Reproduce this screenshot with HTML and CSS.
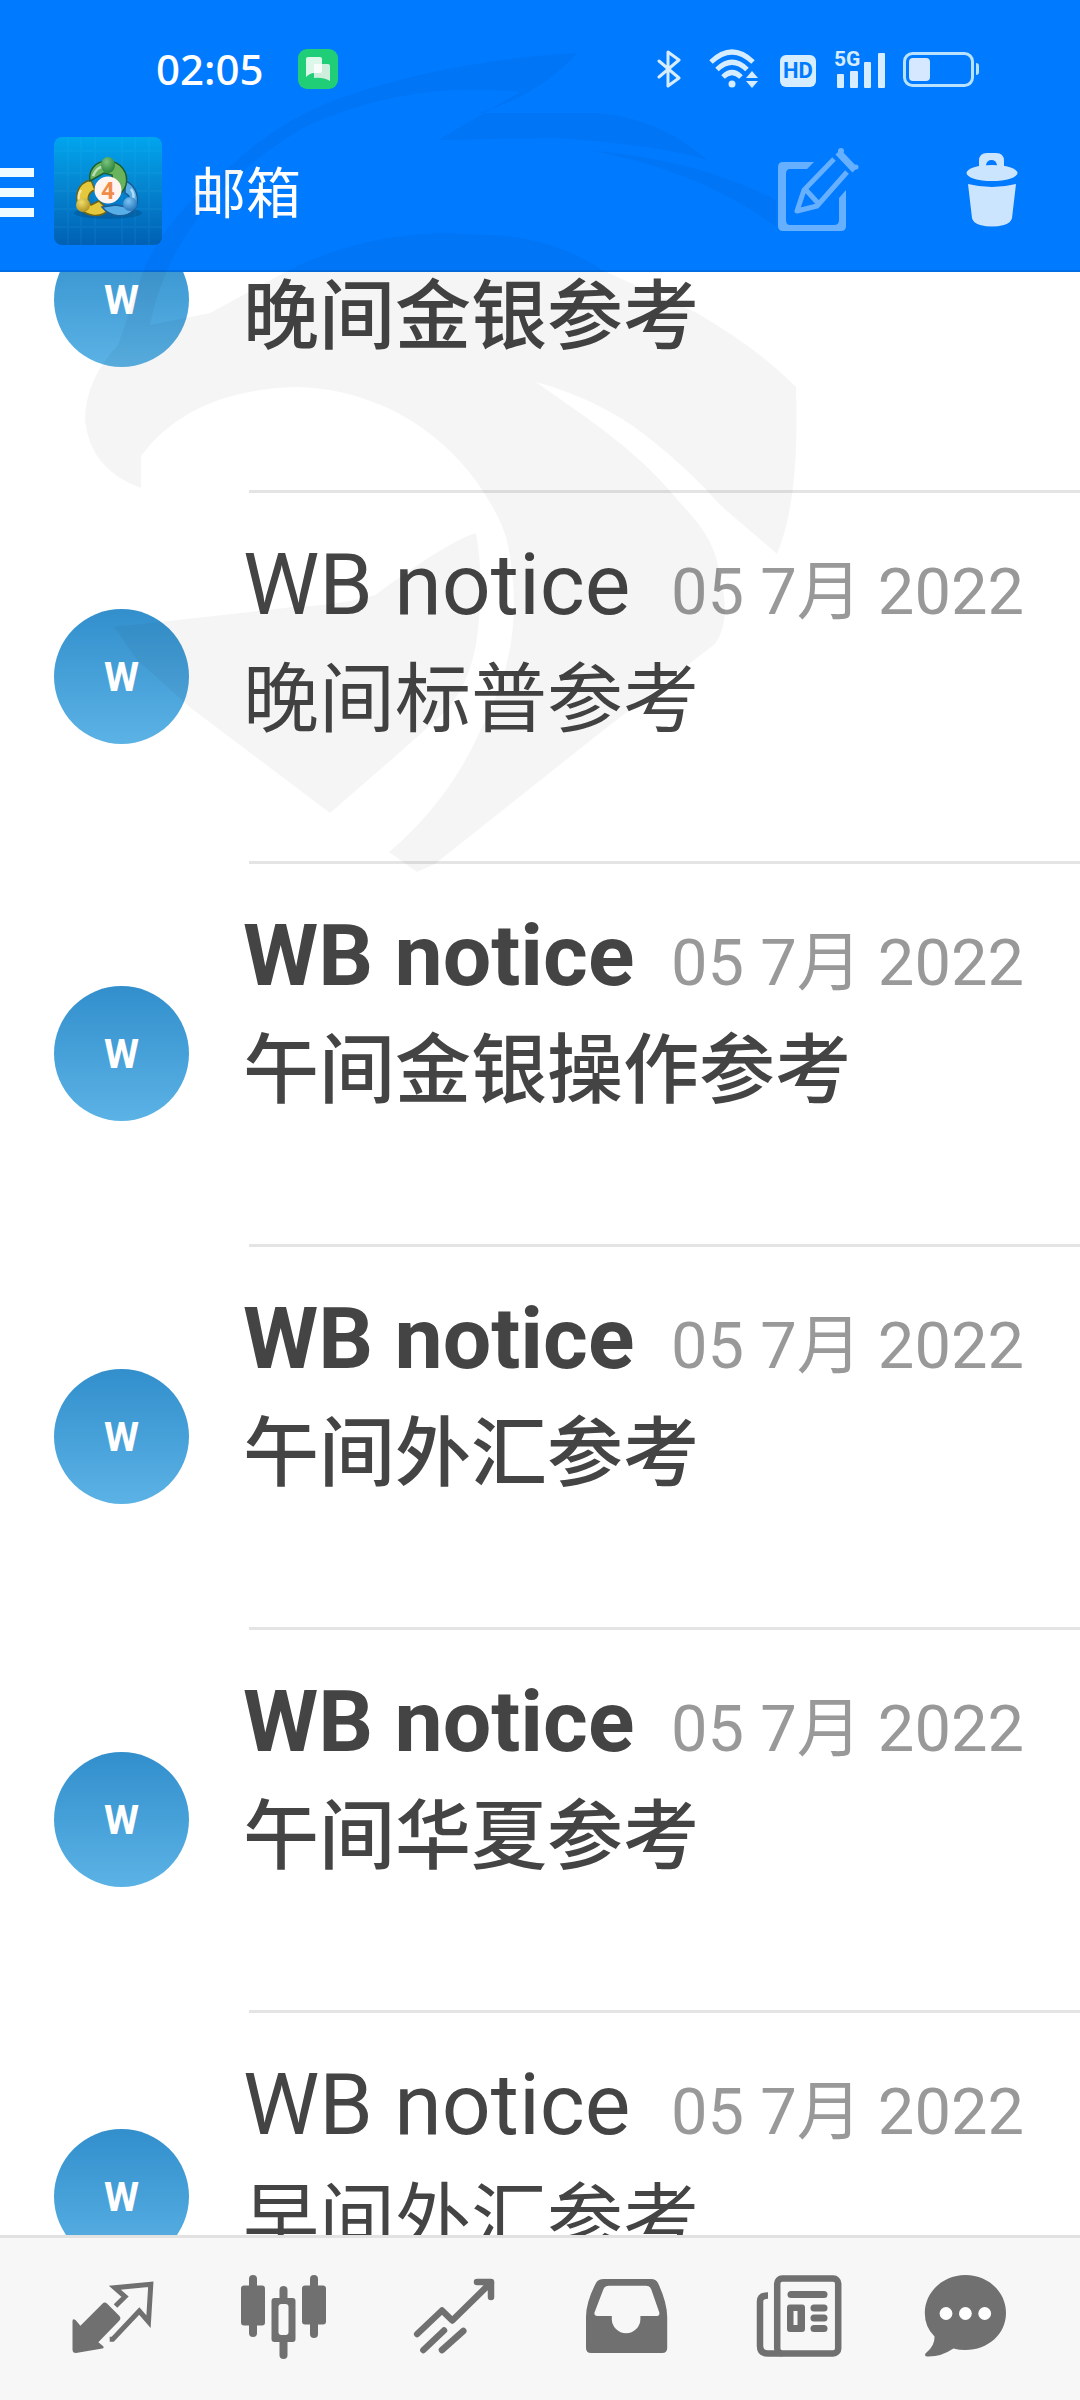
FILE: index.html
```html
<!DOCTYPE html>
<html lang="zh-CN">
<head>
<meta charset="utf-8">
<meta name="viewport" content="width=device-width, initial-scale=1">
<title>邮箱</title>
<link rel="stylesheet" href="styles.css">
</head>
<body>
<div class="app">
  <header class="top">
    <div class="status">
      <span class="clock">02:05</span>
      <svg class="msg-badge" viewBox="0 0 40 40" width="40" height="40" aria-hidden="true">
        <rect width="40" height="40" rx="9" fill="#20ce78"/>
        <path d="M16 15h14q2 0 2 2v15q-7-4-16-3z" fill="#cdeedd"/>
        <path d="M10 8h12q2 0 2 2v12q0 2-2 2h-6q-4 0-8 4V10q0-2 2-2z" fill="#fff" fill-opacity=".85"/>
      </svg>
      <div class="status-icons">
        <svg viewBox="0 0 24 40" width="24" height="40" fill="none" stroke="#d6ecff" stroke-width="3" stroke-linejoin="round" stroke-linecap="round" aria-hidden="true">
          <path d="M2 12l20 17-11 8V3l11 8L2 28"/>
        </svg>
        <svg class="wifi" viewBox="0 0 50 40" width="50" height="40" aria-hidden="true">
          <g fill="none" stroke="#d6ecff" stroke-width="5">
            <path d="M2 13Q23-7 44 13"/><path d="M8 20.500Q23 6 38 20.500"/><path d="M14 28q9-9 18 0"/>
          </g>
          <circle cx="23" cy="35" r="3.500" fill="#d6ecff"/>
          <path d="M43 22l6 7H37zM43 39l6-7H37z" fill="#d6ecff"/>
        </svg>
        <span class="hd">HD</span>
        <span class="signal">
          <span class="gen">5G</span>
          <svg viewBox="0 0 50 40" width="50" height="40" fill="#d6ecff" aria-hidden="true">
            <rect x="2" y="25" width="7" height="14" rx="1"/><rect x="15" y="22" width="8" height="17" rx="1"/><rect x="29" y="13" width="7" height="26" rx="1"/><rect x="43" y="4" width="7" height="35" rx="1"/>
          </svg>
        </span>
        <svg class="battery" viewBox="0 0 76 40" width="76" height="40" aria-hidden="true">
          <rect x="1.500" y="4.500" width="68" height="32" rx="8" fill="none" stroke="#b9e2ff" stroke-width="3"/>
          <rect x="6" y="9" width="21" height="23" rx="4" fill="#d6e8ff"/>
          <path d="M73 14q3 0 3 3v6q0 3-3 3z" fill="#b9e2ff"/>
        </svg>
      </div>
    </div>
    <div class="bar">
      <button class="menu" aria-label="菜单"><span></span><span></span><span></span></button>
      <svg class="logo" viewBox="0 0 108 108" width="108" height="108" aria-hidden="true">
        <defs>
          <linearGradient id="bg" x1="0" y1="0" x2="0" y2="1"><stop offset="0" stop-color="#00a5ee"/><stop offset=".45" stop-color="#0586d0"/><stop offset="1" stop-color="#0060b4"/></linearGradient>
          <radialGradient id="gr" cx=".4" cy=".3" r=".8"><stop offset="0" stop-color="#7cc47c"/><stop offset="1" stop-color="#1e7a34"/></radialGradient>
          <radialGradient id="ye" cx=".4" cy=".3" r=".8"><stop offset="0" stop-color="#f0dc6a"/><stop offset="1" stop-color="#a88a1a"/></radialGradient>
          <radialGradient id="bl" cx=".4" cy=".3" r=".8"><stop offset="0" stop-color="#7cc4f4"/><stop offset="1" stop-color="#1c6cb4"/></radialGradient>
        </defs>
        <rect width="108" height="108" rx="8" fill="url(#bg)"/>
        <path d="M14 0v108M27 0v108M41 0v108M68 0v108M81 0v108M95 0v108M0 14h108M0 36h108M0 54h108M0 72h108M0 90h108" stroke="#5cc8ff" stroke-opacity=".1" stroke-width="1.500"/>
        <ellipse cx="54" cy="76" rx="34" ry="6" fill="#023a6a" opacity=".3"/>
        <path d="M37 43C22 46 20 62 26 71c6 9 22 10 28 2l-9-9-8 4c-5-5-3-13 4-15z" fill="#e6c83c" stroke="#6e6414" stroke-width="1.500"/>
        <path d="M71 44c12 4 16 20 9 29-9 9-24 7-32-3l14-2 10 2c6-4 5-11-1-14z" fill="#58aee6" stroke="#185c98" stroke-width="1.500"/>
        <path d="M36 44c-2-10 5-20 17-20 14 0 22 12 19 24-2 7-7 10-10 12l-4-22-8-2z" fill="#69b35c" stroke="#1c5e32" stroke-width="1.500"/>
        <path d="M39 39q4-10 11-9M27 53q-5 7 0 15M77 52q5 7 0 13" stroke="#fff" stroke-opacity=".55" stroke-width="2.500" fill="none"/>
        <ellipse cx="54" cy="28" rx="7" ry="8" fill="url(#gr)"/>
        <circle cx="29" cy="68" r="7" fill="url(#ye)"/>
        <circle cx="76" cy="67" r="7" fill="url(#bl)"/>
        <circle cx="54" cy="53" r="13.500" fill="#fff4f0"/>
        <text x="54" y="62" class="logo-num">4</text>
      </svg>
      <h1 class="title">邮箱</h1>
      <button class="tool compose" aria-label="写邮件">
        <svg viewBox="0 0 82 84" width="82" height="84" fill="none" stroke="#66b0ff" aria-hidden="true">
          <path d="M36 15l-7 7H12q-4 0-4 5v46q0 5 4 5h44q5 0 5-5V51l7-8v36q0 5-5 5H5q-5 0-5-5V20q0-5 5-5z" fill="#66b0ff" stroke="none"/>
          <path d="M56 12L26 43l-7 21 20-5 30-34M28 43l12 13" stroke-width="5" stroke-linejoin="round"/>
          <path d="M60 5l17 18" stroke-width="7"/>
          <circle cx="63" cy="4" r="3" fill="#66b0ff" stroke="none"/><circle cx="78" cy="20" r="2.500" fill="#66b0ff" stroke="none"/>
        </svg>
      </button>
      <button class="tool trash" aria-label="删除">
        <svg viewBox="0 0 52 76" width="52" height="76" fill="#cce5ff" aria-hidden="true">
          <path d="M13 17V9q0-8 8-8h9q8 0 8 8v8l-7-2v-2q-1-5-5.500-5T20 13v2z"/>
          <ellipse cx="26" cy="21" rx="25.500" ry="8"/>
          <path d="M2 32q24 6 48 0l-4 34q-1 5-8 7-12 3-24 0-7-2-8-7z"/>
        </svg>
      </button>
    </div>
  </header>

  <main class="viewport">
    <ul class="mails">
      <li class="mail unread"><span class="avatar">W</span><a class="body" href="#m1"><span class="line"><span class="from">WB notice</span><time class="date">05 7月 2022</time></span><span class="subject">晚间金银参考</span></a></li>
      <li class="mail"><span class="avatar">W</span><a class="body" href="#m2"><span class="line"><span class="from">WB notice</span><time class="date">05 7月 2022</time></span><span class="subject">晚间标普参考</span></a></li>
      <li class="mail unread"><span class="avatar">W</span><a class="body" href="#m3"><span class="line"><span class="from">WB notice</span><time class="date">05 7月 2022</time></span><span class="subject">午间金银操作参考</span></a></li>
      <li class="mail unread"><span class="avatar">W</span><a class="body" href="#m4"><span class="line"><span class="from">WB notice</span><time class="date">05 7月 2022</time></span><span class="subject">午间外汇参考</span></a></li>
      <li class="mail unread"><span class="avatar">W</span><a class="body" href="#m5"><span class="line"><span class="from">WB notice</span><time class="date">05 7月 2022</time></span><span class="subject">午间华夏参考</span></a></li>
      <li class="mail"><span class="avatar">W</span><a class="body" href="#m6"><span class="line"><span class="from">WB notice</span><time class="date">05 7月 2022</time></span><span class="subject">早间外汇参考</span></a></li>
    </ul>
  </main>

  <nav class="tabs" aria-label="主导航">
    <button class="tab" aria-label="行情">
      <svg viewBox="0 0 90 90" aria-hidden="true">
        <path d="M4.500 49q0-3 3-1l4.900 5.700 22-22q2.400-2.400 4.800 0l12 12q2.400 2.400 0 5L30.300 70.300l5 4q1 2-1 2.200L8 81q-3.500 0-3.500-3.500z" fill="#707070"/>
        <path d="M47.500 34l9.500-9.300-10.200-9 36-3.400-2.300 37.400-9.200-10.700-26.600 28.300h-3" fill="none" stroke="#707070" stroke-width="5"/>
      </svg>
    </button>
    <button class="tab" aria-label="图表">
      <svg viewBox="0 0 90 90" fill="#707070" aria-hidden="true">
        <rect x="10" y="3" width="8" height="62" rx="4"/><rect x="2" y="13.500" width="24" height="40" rx="3"/>
        <rect x="40.500" y="14" width="8" height="73" rx="4"/><rect x="32.500" y="26" width="24" height="44" rx="3"/>
        <rect x="39.500" y="32" width="10" height="31" rx="3" fill="#f7f7f7"/>
        <rect x="71" y="3" width="8" height="63" rx="4"/><rect x="63" y="13.500" width="24" height="39" rx="3"/>
      </svg>
    </button>
    <button class="tab" aria-label="交易">
      <svg viewBox="0 0 90 90" fill="none" stroke="#707070" stroke-width="6.500" stroke-linecap="round" stroke-linejoin="round" aria-hidden="true">
        <path d="M7.200 62L32 38.500l10.300 10L81 10.500M67 10h14v15"/>
        <path d="M13.400 78L34 58.500M32 78l21.300-19" />
      </svg>
    </button>
    <button class="tab" aria-label="邮箱">
      <svg viewBox="0 0 90 90" aria-hidden="true">
        <path fill="#707070" fill-rule="evenodd" d="M23 7h47q5 0 7 4 9 19 9.200 34v31q0 5-5 5H10q-5 0-5-5V45q0-15 10-34 2-4 8-4zM28 13.700q-4 0-5.500 3.300l-9 23.500q-.7 3.500 3 3.500h14.300v3a14.300 14.300 0 0 0 28.600 0v-3H75q4 0 3.300-3.500l-8-23q-1.300-3.800-5.300-3.800z"/>
      </svg>
    </button>
    <button class="tab" aria-label="新闻">
      <svg viewBox="0 0 90 90" aria-hidden="true">
        <g fill="none" stroke="#707070" stroke-width="6.500">
          <rect x="25.200" y="6.500" width="61" height="75" rx="5"/><path d="M16 23.500q-8 0-8 6V74q0 7.500 8 7.500h14"/>
        </g>
        <g fill="#707070">
          <rect x="35.500" y="19" width="40" height="7" rx="3.500"/><path fill-rule="evenodd" d="M38 32.500h12q3 0 3 3V57q0 3-3 3H38q-3 0-3-3V35.500q0-3 3-3zM41.500 39v14h4V39z"/>
          <rect x="58.500" y="32.500" width="17" height="7" rx="3.500"/><rect x="58.500" y="42.500" width="17" height="7" rx="3.500"/><rect x="58.500" y="53" width="17" height="7" rx="3.500"/>
        </g>
      </svg>
    </button>
    <button class="tab" aria-label="聊天">
      <svg viewBox="0 0 90 90" aria-hidden="true">
        <path fill="#707070" d="M42.400 3c23 0 40.600 17 40.600 38S65 78 42.400 78q-6 0-12-1.500Q18 85 4 84.500q-4-1 0-4.500 8-7 7.500-15.500Q1.800 55 1.800 41C1.800 20 20 3 42.400 3z"/>
        <g fill="#fff"><circle cx="23" cy="41.500" r="6.400"/><circle cx="42.400" cy="41.500" r="6.400"/><circle cx="61.700" cy="41.500" r="6.400"/></g>
      </svg>
    </button>
  </nav>

  <svg class="watermark" viewBox="0 0 800 880" width="800" height="880" aria-hidden="true">
    <path d="M577 53Q450 60 340 98 280 120 234 163 160 220 140 280L118 345Q85 380 85 420 90 470 141 488V456Q190 390 297 387C410 390 483 470 506 537Q530 640 481 729 450 800 389 852L417 872 435 864 605 729 715 644Q732 620 720 578C716 535 690 515 669 490 635 450 590 420 536 382Q600 400 645 435 690 470 720 505L777 554Q800 500 796 387 760 350 697 313L602 270Q550 235 483 235 380 225 289 270L210 313 150 325Q175 200 309 125 410 80 520 92L438 140 557 138Q660 145 707 160 660 118 597 113L478 113Q540 95 577 53z"/>
    <path d="M587 150Q700 160 776 200V227Q700 170 587 150zM476 533Q450 540 375 595 340 605 293 607L114 627 137 660 192 709 330 813 398 754 435 721Q472 690 478 630 484 575 476 533z"/>
  </svg>
</div>
</body>
</html>
```
FILE: styles.css
```css
* { box-sizing: border-box; }

body {
  margin: 0;
  background: #fff;
  color: #444;
  font-family: Roboto, "Noto Sans CJK SC", sans-serif;
}

button {
  border: 0;
  padding: 0;
  background: none;
  font: inherit;
  color: inherit;
}

svg { display: block; }

.app {
  position: relative;
  display: flex;
  flex-direction: column;
  height: 100vh;
  overflow: hidden;
}

/* Header */
.top {
  flex: none;
  background: #007aff;
  border-bottom: 2px solid #006fe6;
  color: #fff;
}

.status {
  display: flex;
  align-items: center;
  height: 137px;
  padding: 0 101px 0 156px;
}

.clock {
  font-family: "Noto Sans", sans-serif;
  font-weight: 500;
  font-size: 42px;
  line-height: 48px;
}

.msg-badge { margin-left: 34px; }

.status-icons {
  display: flex;
  align-items: center;
  margin-left: auto;
}

.wifi { margin-left: 28px; }

.hd {
  width: 36px;
  margin: 4px 0 0 21px;
  border-radius: 6px;
  background: #d6ecff;
  color: #007aff;
  font-weight: 700;
  font-size: 22px;
  line-height: 32px;
  text-align: center;
}

.signal {
  position: relative;
  margin-left: 19px;
}

.gen {
  position: absolute;
  top: 0;
  left: -1px;
  color: #d6ecff;
  font-weight: 700;
  font-size: 21px;
  line-height: 20px;
}

.battery { margin-left: 18px; }

.bar {
  display: flex;
  align-items: flex-start;
  height: 133px;
}

.menu {
  display: flex;
  flex-direction: column;
  gap: 11px;
  width: 34px;
  margin-top: 31px;
}

.menu span {
  height: 9px;
  background: #f0fbff;
}

.logo { margin-left: 20px; }

.logo-num {
  fill: #f08c4a;
  font-weight: 700;
  font-size: 24px;
  text-anchor: middle;
}

.title {
  margin: 0 auto 0 29px;
  font-weight: 400;
  font-size: 55px;
  line-height: 114px;
}

.compose { margin-top: 10px; }

.trash { margin: 15px 62px 0 106px; }

/* Mail list, scrolled part way down its first entry */
.viewport {
  flex: 1;
  min-height: 0;
  overflow: hidden;
}

.mails {
  margin: -162px 0 0;
  padding: 0;
  list-style: none;
}

.mail {
  display: flex;
  align-items: center;
  gap: 54px;
  padding-left: 54px;
}

.avatar {
  flex: none;
  width: 135px;
  height: 135px;
  margin-bottom: 4px;
  border-radius: 50%;
  background: linear-gradient(#328fcc, #5bb2e5);
  color: #fff;
  font-weight: 700;
  font-size: 40px;
  line-height: 137px;
  text-align: center;
}

.body {
  flex: 1;
  padding-top: 42px;
  color: inherit;
  text-decoration: none;
}

.body::after {
  content: "";
  display: block;
  height: 3px;
  margin: 96px 0 0 6px;
  background: #e4e4e4;
}

.unread .body::after { margin-top: 108px; }

.line {
  display: flex;
  align-items: baseline;
  justify-content: space-between;
  height: 100px;
  padding-right: 56px;
}

.from {
  font-size: 86px;
  line-height: 100px;
}

.date {
  color: #999;
  font-size: 65px;
  line-height: 80px;
}

.subject {
  display: block;
  font-size: 76px;
  line-height: 130px;
}

.unread .from { font-weight: 700; }

.unread .subject { font-weight: 500; }

/* Bottom tabs */
.tabs {
  flex: none;
  display: flex;
  height: 165px;
  padding: 0 27px;
  border-top: 3px solid #e2e2e2;
  background: #f7f7f7;
}

.tab {
  flex: 1;
  display: flex;
  justify-content: center;
  padding-top: 34px;
}

.tab svg {
  width: 90px;
  height: 90px;
}

.watermark {
  position: absolute;
  top: 0;
  left: 0;
  fill: #000;
  fill-opacity: .04;
  pointer-events: none;
}
```
